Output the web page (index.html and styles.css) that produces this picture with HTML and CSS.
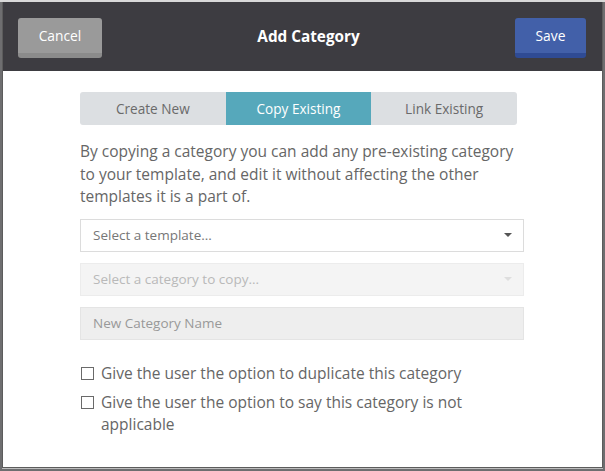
FILE: index.html
```html
<!DOCTYPE html>
<html lang="en">
<head>
<meta charset="utf-8">
<title>Add Category</title>
<link rel="stylesheet" href="styles.css">
</head>
<body>
<div class="backdrop-strip"></div>
<div class="modal">
  <header class="modal-header">
    <button class="btn btn-cancel">Cancel</button>
    <h1 class="modal-title">Add Category</h1>
    <button class="btn btn-save">Save</button>
  </header>
  <main class="modal-body">
    <div class="tabs">
      <button class="tab">Create New</button>
      <button class="tab tab-active">Copy Existing</button>
      <button class="tab">Link Existing</button>
    </div>
    <p class="intro">By copying a category you can add any pre-existing category to your template, and edit it without affecting the other templates it is a part of.</p>
    <div class="field select">
      <span class="placeholder">Select a template...</span>
      <span class="caret"></span>
    </div>
    <div class="field select select-disabled">
      <span class="placeholder">Select a category to copy...</span>
      <span class="caret"></span>
    </div>
    <div class="field input-disabled">
      <span class="placeholder">New Category Name</span>
    </div>
    <div class="checks">
      <label class="check"><span class="box"></span><span class="check-text">Give the user the option to duplicate this category</span></label>
      <label class="check"><span class="box"></span><span class="check-text">Give the user the option to say this category is not applicable</span></label>
    </div>
  </main>
</div>
</body>
</html>
```
FILE: styles.css
```css
* { box-sizing: border-box; }

html, body {
  margin: 0;
  padding: 0;
}

body {
  width: 605px;
  height: 471px;
  background: #6e6e70;
  font-family: "Open Sans", "Noto Sans", sans-serif;
  overflow: hidden;
}

.backdrop-strip {
  height: 2px;
  background: #d9d9d9;
}

.modal {
  margin-left: 2px;
  width: 601px;
  height: 466px;
  background: #fff;
  border: 1px solid #5c5c5c;
  border-top: none;
  box-shadow: 0 1px 0 #bdbdbd;
  overflow: hidden;
}

.modal-header {
  height: 69px;
  background: #3d3c41;
  display: flex;
  align-items: center;
  justify-content: space-between;
  padding: 2px 16px 0 15px;
}

.btn {
  height: 40px;
  border: none;
  border-radius: 3px;
  color: #fff;
  font-family: inherit;
  font-size: 13.8px;
  padding: 0;
  cursor: pointer;
}

.btn-cancel {
  width: 84px;
  background: #9a9a9a;
  border-bottom: 5px solid #8b8b8b;
}

.btn-save {
  width: 71px;
  background: #4260a9;
  border-bottom: 5px solid #2f4b94;
}

.modal-title {
  margin: 0 0 3px;
  color: #fff;
  font-size: 15.3px;
  font-weight: 700;
}

.modal-body {
  padding: 21px 0 0 77px;
  width: 521px;
}

.tabs {
  display: flex;
  width: 437px;
  height: 33px;
  border-radius: 3px;
  overflow: hidden;
}

.tab {
  flex: 1;
  border: none;
  background: #dcdfe2;
  color: #6a6a6a;
  font-family: inherit;
  font-size: 13.6px;
  padding: 0;
}

.tab-active {
  background: #56a8bb;
  color: #fff;
}

.intro {
  margin: 15px 0 11px;
  color: #666;
  font-size: 15.5px;
  line-height: 22.5px;
}

.field {
  height: 33px;
  display: flex;
  align-items: center;
  justify-content: space-between;
  padding: 0 11px 0 12px;
  font-size: 13.5px;
  margin-bottom: 11px;
}

.select {
  background: #fff;
  border: 1px solid #dcdcdc;
  color: #777;
}

.select-disabled {
  background: #f4f4f4;
  border-color: #ececec;
  color: #b9b9b9;
}

.input-disabled {
  background: #eeeeee;
  border: 1px solid #e4e4e4;
  color: #999;
  margin-bottom: 22px;
}

.caret {
  width: 0;
  height: 0;
  border-left: 4px solid transparent;
  border-right: 4px solid transparent;
  border-top: 4px solid #555;
}

.select-disabled .caret {
  border-top-color: #dedede;
}

.checks {
  display: flex;
  flex-direction: column;
  gap: 7px;
}

.check {
  display: flex;
  align-items: flex-start;
  color: #666;
  font-size: 15.5px;
  line-height: 22px;
  width: 420px;
}

.box {
  flex: none;
  width: 13px;
  height: 13px;
  border: 1px solid #6a6a6a;
  background: #fff;
  margin: 5px 7px 0 1px;
}
```
